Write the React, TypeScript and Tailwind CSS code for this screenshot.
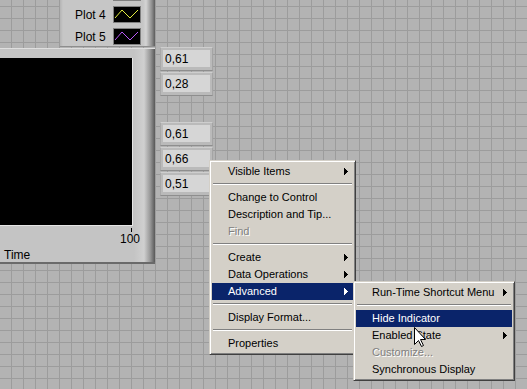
import React from "react";

type Item =
  | { label: string; arrow?: boolean; disabled?: boolean; active?: boolean }
  | "sep";

const mainMenu: Item[] = [
  { label: "Visible Items", arrow: true },
  "sep",
  { label: "Change to Control" },
  { label: "Description and Tip..." },
  { label: "Find", disabled: true },
  "sep",
  { label: "Create", arrow: true },
  { label: "Data Operations", arrow: true },
  { label: "Advanced", arrow: true, active: true },
  "sep",
  { label: "Display Format..." },
  "sep",
  { label: "Properties" },
];

const advancedMenu: Item[] = [
  { label: "Run-Time Shortcut Menu", arrow: true },
  "sep",
  { label: "Hide Indicator", active: true },
  { label: "Enabled State", arrow: true },
  { label: "Customize...", disabled: true },
  { label: "Synchronous Display" },
];

// null = empty slot between the two indicator groups
const indicators = ["0,61", "0,28", null, "0,61", "0,66", "0,51"];

const plots = [
  { label: "", color: "#e4f040" },
  { label: "Plot 4", color: "#e4f040" },
  { label: "Plot 5", color: "#b858f8" },
];

const Arrow = ({ white }: { white?: boolean }) => (
  <svg width="4" height="7" viewBox="0 0 4 7" className="shrink-0">
    <g fill={white ? "#ffffff" : "#000000"}>
      <rect x="0" y="0" width="1" height="7" />
      <rect x="1" y="1" width="1" height="5" />
      <rect x="2" y="2" width="1" height="3" />
      <rect x="3" y="3" width="1" height="1" />
    </g>
  </svg>
);

const Menu = ({ items, className }: { items: Item[]; className: string }) => (
  <div
    className={`absolute flex flex-col bg-[#d4d0c8] border border-t-[#d4d0c8] border-l-[#d4d0c8] border-r-[#404040] border-b-[#404040] shadow-[inset_1px_1px_0_#ffffff,inset_-1px_-1px_0_#808080] p-[2px] ${className}`}
  >
    {items.map((it, i) =>
      it === "sep" ? (
        <div key={i} className="h-[9px] pt-[3px] px-px">
          <div className="h-px bg-[#808080]" />
          <div className="h-px bg-white" />
        </div>
      ) : (
        <div
          key={i}
          className={`flex items-center h-[17px] pl-4 pr-[5px] ${
            it.active
              ? "bg-[#0a246a] text-white"
              : it.disabled
              ? "text-[#808080] [text-shadow:1px_1px_0_#ffffff]"
              : "text-black"
          }`}
        >
          <span className="flex-1 leading-none whitespace-nowrap">{it.label}</span>
          {it.arrow && <Arrow white={it.active} />}
        </div>
      )
    )}
  </div>
);

export default function App() {
  return (
    <div className="relative w-[527px] h-[389px] overflow-hidden text-[11px] font-['Liberation_Sans',Arial,sans-serif] bg-[#b3b3b3] bg-[linear-gradient(to_right,#9c9c9c_1px,transparent_1px),linear-gradient(to_bottom,#9c9c9c_1px,transparent_1px)] bg-[size:12px_12px] bg-[position:11px_6px]">
      {/* plot legend (scrolled, first row cut off) */}
      <div className="absolute left-[60px] top-0 w-[95px] h-[47px] overflow-hidden border-b border-[#8e8e8e] bg-[linear-gradient(to_right,#b4b4b4_0px,#c6c6c6_3px,#c6c6c6_83px,#d4d4d4_86px,#8c8c8c_92px,#5c5c5c_95px)]">
        <div className="flex flex-col gap-[5px] -mt-[16px]">
          {plots.map((p, i) => (
            <div key={i} className="flex items-center h-[17px]">
              <span className="w-[53px] pl-[15px] leading-none text-[12px]">{p.label}</span>
              <div className="w-[28px] h-[17px] bg-black border border-[#808080]">
                <svg width="26" height="15" viewBox="0 0 26 15">
                  <polyline points="1,11 8,3 16,11 24,3" fill="none" stroke={p.color} strokeWidth="1" />
                </svg>
              </div>
            </div>
          ))}
        </div>
      </div>

      {/* waveform graph */}
      <div className="absolute left-0 top-[48px] w-[155px] h-[216px] flex flex-col border-t border-[#dedede] border-b-2 border-b-[#6a6a6a] bg-[linear-gradient(to_right,#c4c4c4_0px,#c4c4c4_134px,#d0d0d0_144px,#9a9a9a_150px,#585858_155px)]">
        <div className="mt-[9px] w-[133px] h-[168px] bg-black border-r border-b border-[#e6e6e6]" />
        <div className="flex flex-col w-[140px] leading-none text-[12px]">
          <div className="ml-[131px] mt-[2px] w-px h-[4px] bg-black" />
          <div className="self-end mt-[1px]">100</div>
          <div className="ml-[4px] mt-[4px]">Time</div>
        </div>
      </div>

      {/* numeric indicators */}
      <div className="absolute left-[160px] top-[47px] flex flex-col gap-px">
        {indicators.map((v, i) =>
          v === null ? (
            <div key={i} className="h-[24px]" />
          ) : (
            <div
              key={i}
              className="w-[53px] h-[24px] flex bg-[#bababa] border border-t-[#cecece] border-r-[#a4a4a4] border-b-[#8e8e8e] border-l-[#a8a8a8] pt-[2px] px-[2px] pb-[3px]"
            >
              <div className="flex-1 flex items-center bg-[#d6d6d6] pl-[2px] leading-none text-[12px]">{v}</div>
            </div>
          )
        )}
      </div>

      <Menu items={mainMenu} className="left-[209px] top-[160px] w-[147px]" />
      <Menu items={advancedMenu} className="left-[353px] top-[281px] w-[162px]" />

      {/* mouse pointer */}
      <svg width="13" height="21" viewBox="0 0 13 21" className="absolute left-[414px] top-[327px]">
        <polygon
          points="0.5,0.5 0.5,17.5 4.5,13.5 7.5,19.5 9.5,18.5 6.5,12.5 11.5,12.5"
          fill="#ffffff"
          stroke="#000000"
          strokeWidth="1"
        />
      </svg>
    </div>
  );
}
